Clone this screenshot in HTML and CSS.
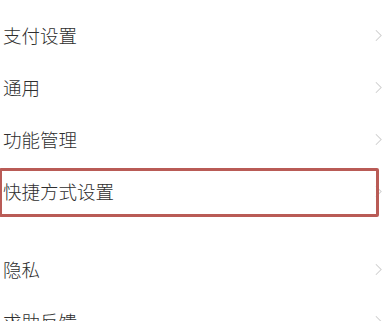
FILE: index.html
```html
<!DOCTYPE html>
<html lang="zh-CN">
<head>
  <meta charset="UTF-8" />
  <meta name="viewport" content="width=device-width, initial-scale=1" />
  <title>设置</title>
  <link rel="stylesheet" href="styles.css">
</head>
<body>

<ul class="menu">
  <li class="row"><span>支付设置</span><svg class="chev" viewBox="0 0 8 14"><path d="M1 1 L7 7 L1 13"/></svg></li>
  <li class="row"><span>通用</span><svg class="chev" viewBox="0 0 8 14"><path d="M1 1 L7 7 L1 13"/></svg></li>
  <li class="row"><span>功能管理</span><svg class="chev" viewBox="0 0 8 14"><path d="M1 1 L7 7 L1 13"/></svg></li>
  <li class="row highlight"><span>快捷方式设置</span><svg class="chev" viewBox="0 0 8 14"><path d="M1 1 L7 7 L1 13"/></svg></li>
</ul>

<ul class="menu second">
  <li class="row"><span>隐私</span><svg class="chev" viewBox="0 0 8 14"><path d="M1 1 L7 7 L1 13"/></svg></li>
  <li class="row"><span>求助反馈</span><svg class="chev" viewBox="0 0 8 14"><path d="M1 1 L7 7 L1 13"/></svg></li>
</ul>

</body>
</html>
```

FILE: styles.css
```css
* { box-sizing: border-box; margin: 0; padding: 0; }

body {
  font-family: "Noto Sans CJK SC", "Noto Sans", sans-serif;
  background: #fff;
  color: #2e2e2e;
  overflow: hidden;
}

.menu {
  list-style: none;
  padding-top: 9px;
}

.menu.second {
  padding-top: 26px;
}

.row {
  display: flex;
  align-items: center;
  justify-content: space-between;
  height: 52px;
  padding: 0 2px 0 3px;
  font-size: 18.5px;
  font-weight: 300;
  position: relative;
}

.chev {
  width: 7px;
  height: 13px;
  fill: none;
  stroke: #cfcfcf;
  stroke-width: 1.2;
}

/* red annotation box */
.highlight::after {
  content: "";
  position: absolute;
  top: 3px;
  bottom: 0;
  left: -1px;
  right: 5px;
  border: 3px solid #b95b56;
  border-radius: 2px;
}
```
